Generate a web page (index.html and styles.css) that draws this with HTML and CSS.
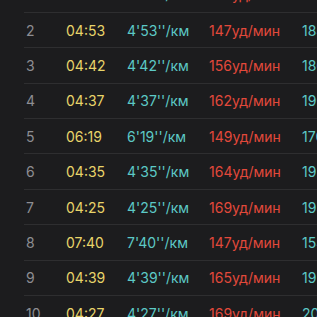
FILE: index.html
```html
<!DOCTYPE html>
<html lang="ru">
<head>
    <meta charset="UTF-8">
    <meta name="viewport" content="width=device-width, initial-scale=1.0">
    <title>Отрезки</title>
    <link rel="stylesheet" href="styles.css">
</head>
<body>
    <div class="splits">
        <div class="split-row">
            <span class="idx">1</span>
            <span class="time">04:48</span>
            <span class="pace">4'48''/км</span>
            <span class="hr">139уд/мин</span>
            <span class="cad">176</span>
        </div>
        <div class="split-row">
            <span class="idx">2</span>
            <span class="time">04:53</span>
            <span class="pace">4'53''/км</span>
            <span class="hr">147уд/мин</span>
            <span class="cad">184</span>
        </div>
        <div class="split-row">
            <span class="idx">3</span>
            <span class="time">04:42</span>
            <span class="pace">4'42''/км</span>
            <span class="hr">156уд/мин</span>
            <span class="cad">186</span>
        </div>
        <div class="split-row">
            <span class="idx">4</span>
            <span class="time">04:37</span>
            <span class="pace">4'37''/км</span>
            <span class="hr">162уд/мин</span>
            <span class="cad">190</span>
        </div>
        <div class="split-row">
            <span class="idx">5</span>
            <span class="time">06:19</span>
            <span class="pace">6'19''/км</span>
            <span class="hr">149уд/мин</span>
            <span class="cad">170</span>
        </div>
        <div class="split-row">
            <span class="idx">6</span>
            <span class="time">04:35</span>
            <span class="pace">4'35''/км</span>
            <span class="hr">164уд/мин</span>
            <span class="cad">192</span>
        </div>
        <div class="split-row">
            <span class="idx">7</span>
            <span class="time">04:25</span>
            <span class="pace">4'25''/км</span>
            <span class="hr">169уд/мин</span>
            <span class="cad">194</span>
        </div>
        <div class="split-row">
            <span class="idx">8</span>
            <span class="time">07:40</span>
            <span class="pace">7'40''/км</span>
            <span class="hr">147уд/мин</span>
            <span class="cad">154</span>
        </div>
        <div class="split-row">
            <span class="idx">9</span>
            <span class="time">04:39</span>
            <span class="pace">4'39''/км</span>
            <span class="hr">165уд/мин</span>
            <span class="cad">192</span>
        </div>
        <div class="split-row">
            <span class="idx">10</span>
            <span class="time">04:27</span>
            <span class="pace">4'27''/км</span>
            <span class="hr">169уд/мин</span>
            <span class="cad">200</span>
        </div>
    </div>
</body>
</html>
```

FILE: styles.css
```css
/* Global styles */
body {
    margin: 0;
    padding: 0;
    background-color: #1c1c1e;
    font-family: Inter, "Noto Sans", sans-serif;
    font-size: 14px;
    overflow: hidden;
    height: 100vh;
}

/* Splits list, scrolled so the first row is mostly hidden */
.splits {
    margin-top: -23.4px;
    margin-left: 24px;
}

.split-row {
    display: grid;
    grid-template-columns: 42px 61px 82px 93px 60px;
    align-items: center;
    height: 35.375px;
    box-sizing: border-box;
    border-top: 1px solid #2e2e30;
    white-space: nowrap;
}

.split-row:first-child {
    border-top: none;
}

.idx {
    padding-left: 2px;
    color: #8d8d92;
}

.time {
    color: #e8d46a;
}

.pace {
    color: #5cc9c6;
}

.hr {
    color: #e2493b;
}

.cad {
    color: #5cc9c6;
}
```
